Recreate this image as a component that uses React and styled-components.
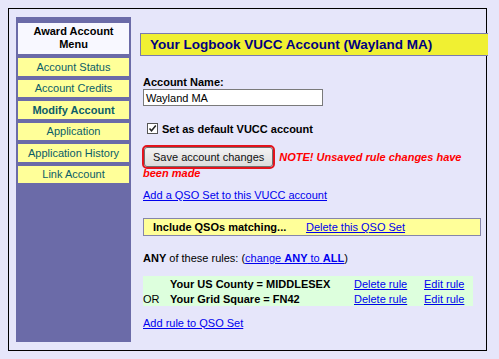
import React from "react";
import styled, { createGlobalStyle } from "styled-components";

const Global = createGlobalStyle`
  html, body { margin: 0; padding: 0; background: #E6E6FA; }
  body { font-family: "Liberation Sans", Arial, sans-serif; font-size: 11px; color: #000; }
`;

const Page = styled.div`
  padding: 8px;
  background: #E6E6FA;
`;

const Frame = styled.div`
  box-sizing: border-box;
  width: 479px;
  height: 343px;
  border: 1px solid #000;
  padding: 8px 0 8px 7px;
  display: flex;
  align-items: stretch;
`;

const Sidebar = styled.nav`
  box-sizing: border-box;
  width: 115px;
  flex: none;
  background: #6B6BA8;
  padding: 5.5px 2px 0 2px;
  display: flex;
  flex-direction: column;
  gap: 4px;
`;

const MenuHeader = styled.div`
  height: 31px;
  margin-bottom: 0.5px;
  background: #F8F8FF;
  display: flex;
  align-items: center;
  justify-content: center;
  text-align: center;
  font-weight: bold;
  font-size: 11px;
  line-height: 12.7px;
  color: #000;
`;

const MenuItem = styled.div`
  height: 17.5px;
  background: #FFFF99;
  display: flex;
  align-items: center;
  justify-content: center;
  font-size: 11px;
  font-weight: ${(p) => (p.$active ? "bold" : "normal")};
  color: #0B5D68;
`;

const Main = styled.main`
  box-sizing: border-box;
  width: 355px;
  flex: none;
  padding: 16px 0 0 9px;
`;

const TitleBar = styled.div`
  box-sizing: border-box;
  width: 348px;
  height: 23px;
  background: #F0F032;
  border: 1px solid #7A7AAE;
  border-right: none;
  padding-left: 9px;
  display: flex;
  align-items: center;
  font-weight: bold;
  font-size: 13.5px;
  color: #000080;
  white-space: nowrap;
`;

const Content = styled.div`
  padding-left: 3px;
`;

const Label = styled.div`
  margin-top: 20px;
  font-weight: bold;
  line-height: 13px;
`;

const TextInput = styled.div`
  box-sizing: border-box;
  width: 180px;
  height: 17px;
  border: 1px solid #7A7A7A;
  background: #fff;
  padding-left: 2px;
  display: flex;
  align-items: center;
  font-size: 11px;
`;

const CheckRow = styled.label`
  margin-top: 16px;
  height: 13px;
  display: flex;
  align-items: center;
  gap: 4px;
  padding-left: 4px;
  font-weight: bold;
`;

const Box = styled.span`
  box-sizing: border-box;
  width: 11px;
  height: 11px;
  border: 1px solid #555;
  background: #fff;
  display: inline-flex;
  align-items: center;
  justify-content: center;
`;

const SaveLine = styled.div`
  margin-top: 11.5px;
  line-height: 13px;
`;

const SaveButton = styled.button`
  display: inline-block;
  box-sizing: border-box;
  height: 20px;
  margin: 0 6px 0 1px;
  padding: 0 8px;
  font-family: "Liberation Sans", Arial, sans-serif;
  font-size: 11px;
  line-height: 18px;
  color: #111;
  background: linear-gradient(#F3F3F3, #DCDCDC);
  border: 1px solid #707070;
  border-radius: 3px;
  outline: 2px solid #E3141C;
  outline-offset: 0;
  vertical-align: baseline;
`;

const Note = styled.span`
  color: #F00;
  font-weight: bold;
  font-style: italic;
`;

const Link = styled.a`
  color: #0000EE;
  text-decoration: underline;
  font-weight: ${(p) => (p.$bold ? "bold" : "normal")};
  cursor: pointer;
`;

const LinkLine = styled.div`
  margin-top: ${(p) => p.$mt}px;
  line-height: 13px;
`;

const SetBar = styled.div`
  box-sizing: border-box;
  margin-top: 16px;
  width: 338px;
  height: 18px;
  background: #FFFF99;
  border: 1px solid #8585AA;
  padding-left: 9px;
  display: flex;
  align-items: center;
`;

const SetTitle = styled.span`
  width: 153px;
  flex: none;
  font-weight: bold;
`;

const RulesLine = styled.div`
  margin-top: 15.5px;
  line-height: 13px;
`;

const RulesTable = styled.div`
  margin-top: 11.5px;
  width: 330px;
  background: #DDFFDD;
  display: grid;
  grid-template-columns: 27px 184px 70px 1fr;
  grid-auto-rows: 15px;
  align-items: center;
`;

const RuleText = styled.span`
  font-weight: bold;
`;

const rules = [
  { op: "", text: "Your US County = MIDDLESEX" },
  { op: "OR", text: "Your Grid Square = FN42" },
];

const menu = [
  { label: "Account Status" },
  { label: "Account Credits" },
  { label: "Modify Account", active: true },
  { label: "Application" },
  { label: "Application History" },
  { label: "Link Account" },
];

export default function App() {
  return (
    <>
      <Global />
      <Page>
        <Frame>
          <Sidebar>
            <MenuHeader>
              Award Account
              <br />
              Menu
            </MenuHeader>
            {menu.map((m) => (
              <MenuItem key={m.label} $active={m.active}>
                {m.label}
              </MenuItem>
            ))}
          </Sidebar>
          <Main>
            <TitleBar>Your Logbook VUCC Account (Wayland MA)</TitleBar>
            <Content>
              <Label>Account Name:</Label>
              <TextInput>Wayland MA</TextInput>
              <CheckRow>
                <Box>
                  <svg width="9" height="9" viewBox="0 0 9 9">
                    <path d="M1.5 4.5 L3.5 6.8 L7.8 1.5" fill="none" stroke="#222" strokeWidth="1.5" />
                  </svg>
                </Box>
                Set as default VUCC account
              </CheckRow>
              <SaveLine>
                <SaveButton type="button">Save account changes</SaveButton>
                <Note>NOTE! Unsaved rule changes have</Note>
                <br />
                <Note>been made</Note>
              </SaveLine>
              <LinkLine $mt={9.5}>
                <Link>Add a QSO Set to this VUCC account</Link>
              </LinkLine>
              <SetBar>
                <SetTitle>Include QSOs matching...</SetTitle>
                <Link>Delete this QSO Set</Link>
              </SetBar>
              <RulesLine>
                <b>ANY</b> of these rules: (
                <Link>
                  change <Link as="span" $bold>ANY</Link> to <Link as="span" $bold>ALL</Link>
                </Link>
                )
              </RulesLine>
              <RulesTable>
                {rules.map((r) => (
                  <React.Fragment key={r.text}>
                    <span>{r.op}</span>
                    <RuleText>{r.text}</RuleText>
                    <Link>Delete rule</Link>
                    <Link>Edit rule</Link>
                  </React.Fragment>
                ))}
              </RulesTable>
              <LinkLine $mt={10.5}>
                <Link>Add rule to QSO Set</Link>
              </LinkLine>
            </Content>
          </Main>
        </Frame>
      </Page>
    </>
  );
}
